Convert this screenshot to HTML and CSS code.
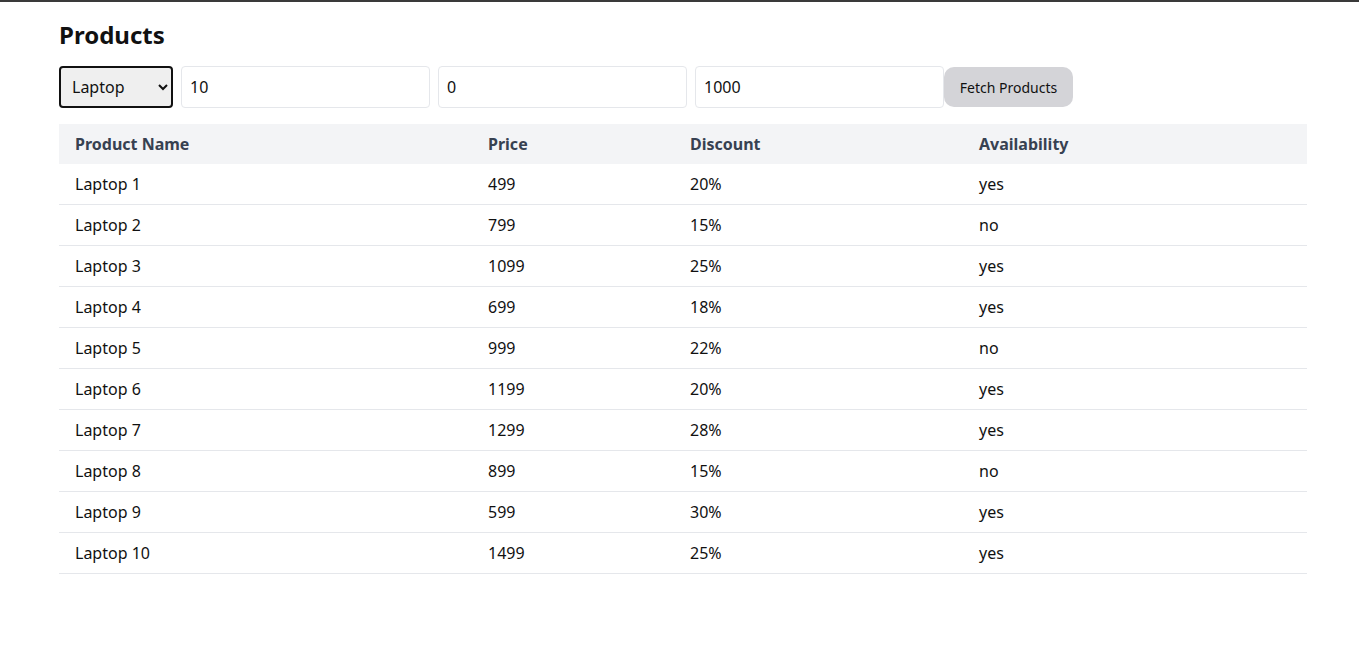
FILE: index.html
```html
<!DOCTYPE html>
<html>
<head>
<meta charset="utf-8">
<link rel="stylesheet" href="styles.css">
</head>
<body>
<div class="page">
  <h1 class="title">Products</h1>
  <div class="controls">
    <select class="category">
      <option>Laptop</option>
      <option>Phone</option>
      <option>Tablet</option>
    </select>
    <input class="field" type="text" value="10">
    <input class="field" type="text" value="0">
    <input class="field" type="text" value="1000">
    <button class="fetch">Fetch Products</button>
  </div>
  <table class="products">
    <thead>
      <tr><th class="c1">Product Name</th><th class="c2">Price</th><th class="c3">Discount</th><th class="c4">Availability</th></tr>
    </thead>
    <tbody>
      <tr><td>Laptop 1</td><td>499</td><td>20%</td><td>yes</td></tr>
      <tr><td>Laptop 2</td><td>799</td><td>15%</td><td>no</td></tr>
      <tr><td>Laptop 3</td><td>1099</td><td>25%</td><td>yes</td></tr>
      <tr><td>Laptop 4</td><td>699</td><td>18%</td><td>yes</td></tr>
      <tr><td>Laptop 5</td><td>999</td><td>22%</td><td>no</td></tr>
      <tr><td>Laptop 6</td><td>1199</td><td>20%</td><td>yes</td></tr>
      <tr><td>Laptop 7</td><td>1299</td><td>28%</td><td>yes</td></tr>
      <tr><td>Laptop 8</td><td>899</td><td>15%</td><td>no</td></tr>
      <tr><td>Laptop 9</td><td>599</td><td>30%</td><td>yes</td></tr>
      <tr><td>Laptop 10</td><td>1499</td><td>25%</td><td>yes</td></tr>
    </tbody>
  </table>
</div>
</body>
</html>
```

FILE: styles.css
```css
html, body {
  margin: 0;
  padding: 0;
  background: #ffffff;
}
body {
  font-family: "Noto Sans", "Open Sans", sans-serif;
  color: #111827;
  border-top: 2px solid #3a3a3a;
}
.page {
  width: 1248px;
  padding: 17px 0 0 59px;
}
.title {
  margin: 0 0 15px 0;
  font-size: 24px;
  line-height: 32px;
  font-weight: 700;
  color: #111111;
}
.controls {
  display: flex;
  align-items: center;
  margin-bottom: 16px;
}
.category {
  width: 114px;
  height: 42px;
  box-sizing: border-box;
  border: 2px solid #111111;
  border-radius: 4px;
  background: #efefef;
  font-family: inherit;
  font-size: 16px;
  color: #111111;
  padding: 0 6px 0 7px;
  margin-right: 8px;
}
.field {
  width: 249px;
  height: 42px;
  box-sizing: border-box;
  border: 1px solid #e5e7eb;
  border-radius: 4px;
  padding: 0 8px;
  font-family: inherit;
  font-size: 16px;
  color: #111111;
  margin-right: 8px;
  outline: none;
}
.field:last-of-type {
  margin-right: 0;
}
.fetch {
  width: 129px;
  height: 40px;
  border: none;
  border-radius: 10px;
  background: #d4d4d8;
  font-family: inherit;
  font-size: 14px;
  color: #111111;
  padding: 0;
}
.products {
  width: 1248px;
  border-collapse: collapse;
  font-size: 16px;
}
.products th {
  background: #f3f4f6;
  color: #374151;
  font-weight: 700;
  text-align: left;
  height: 40px;
  padding: 0 16px;
}
.products td {
  text-align: left;
  height: 40px;
  padding: 0 16px;
  border-bottom: 1px solid #e5e7eb;
  color: #111111;
}
.c1 { width: 381px; }
.c2 { width: 170px; }
.c3 { width: 257px; }
.c4 { width: 312px; }
```
